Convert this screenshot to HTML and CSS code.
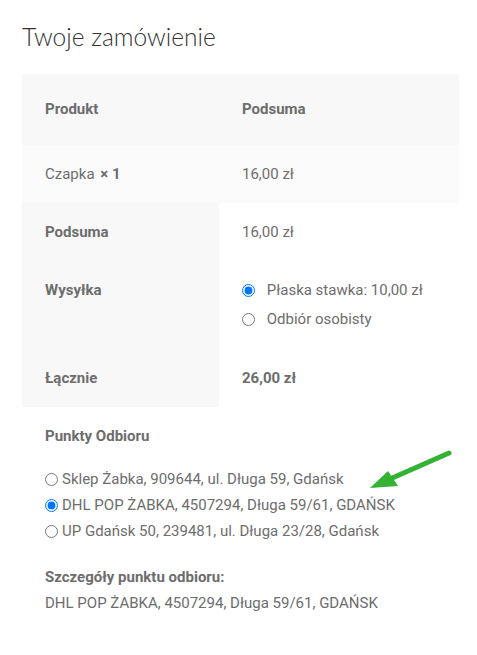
FILE: index.html
```html
<!DOCTYPE html>
<html lang="pl">
<head>
  <meta charset="UTF-8">
  <meta name="viewport" content="width=device-width, initial-scale=1.0">
  <title>Twoje zamówienie</title>
  <link rel="stylesheet" href="styles.css">
</head>
<body>
  <div class="order">
    <h3 class="order-title">Twoje zamówienie</h3>

    <table class="review">
      <thead>
        <tr>
          <th class="col-name">Produkt</th>
          <th class="col-total">Podsuma</th>
        </tr>
      </thead>
      <tbody>
        <tr class="cart-item">
          <td>Czapka <strong class="qty">× 1</strong></td>
          <td>16,00 zł</td>
        </tr>
      </tbody>
      <tfoot>
        <tr class="subtotal">
          <th>Podsuma</th>
          <td>16,00 zł</td>
        </tr>
        <tr class="shipping">
          <th>Wysyłka</th>
          <td>
            <ul class="methods">
              <li><label><input type="radio" name="ship" checked> Płaska stawka: 10,00 zł</label></li>
              <li><label><input type="radio" name="ship"> Odbiór osobisty</label></li>
            </ul>
          </td>
        </tr>
        <tr class="total">
          <th>Łącznie</th>
          <td><strong>26,00 zł</strong></td>
        </tr>
      </tfoot>
    </table>

    <div class="points">
      <h4>Punkty Odbioru</h4>
      <label class="point"><input type="radio" name="point">Sklep Żabka, 909644, ul. Długa 59, Gdańsk</label>
      <label class="point"><input type="radio" name="point" checked>DHL POP ŻABKA, 4507294, Długa 59/61, GDAŃSK</label>
      <label class="point"><input type="radio" name="point">UP Gdańsk 50, 239481, ul. Długa 23/28, Gdańsk</label>

      <h4 class="details-title">Szczegóły punktu odbioru:</h4>
      <p class="details">DHL POP ŻABKA, 4507294, Długa 59/61, GDAŃSK</p>
    </div>

    <svg class="arrow" width="95" height="50" viewBox="0 0 95 50">
      <line x1="89" y1="8" x2="30" y2="34" stroke="#33b233" stroke-width="5" stroke-linecap="round"/>
      <polygon points="10,43 28,26 38,41" fill="#33b233"/>
    </svg>
  </div>
</body>
</html>
```

FILE: styles.css
```css
body {
  margin: 0;
  background: #fff;
  font-family: Roboto, "Noto Sans", sans-serif;
  font-size: 15px;
  color: #6d6d6d;
}
.order {
  position: relative;
  padding: 0 18px 0 22px;
}
.order-title {
  margin: 0;
  padding-top: 22px;
  height: 74px;
  font-family: Lato, sans-serif;
  font-size: 24.5px;
  font-weight: 300;
  color: #333;
  box-sizing: border-box;
}
.review {
  width: 437px;
  border-collapse: collapse;
  border-spacing: 0;
}
.review th,
.review td {
  text-align: left;
  vertical-align: top;
  line-height: 18px;
  padding: 20px 23px;
}
.review th {
  font-weight: 700;
}
.review .col-name {
  width: 151px;
}
.review thead th {
  background: #f8f8f8;
  padding-top: 26px;
  padding-bottom: 27px;
}
.cart-item td {
  background: #fbfbfb;
}
.qty {
  margin-left: 2px;
}
.review tfoot th {
  background: #f8f8f8;
}
.review tfoot td {
  background: #fff;
}
.shipping th,
.shipping td {
  padding-bottom: 21px;
}
.methods {
  list-style: none;
  margin: 0;
  padding: 0;
}
.methods li {
  margin-bottom: 11px;
}
.methods li:last-child {
  margin-bottom: 0;
}
.methods input {
  margin: 0 8px 0 0;
  width: 13px;
  height: 13px;
  vertical-align: -2px;
}
.points {
  padding: 20px 23px 0;
}
.points h4 {
  margin: 0 0 21px;
  font-size: 15px;
  line-height: 18px;
  font-weight: 700;
}
.point {
  display: block;
  line-height: 26px;
}
.point input {
  margin: 0 4px 0 0;
  width: 13px;
  height: 13px;
  vertical-align: -2px;
}
.points .details-title {
  margin: 24px 0 8px;
}
.details {
  margin: 0;
  line-height: 18px;
}
.arrow {
  position: absolute;
  left: 360px;
  top: 445px;
}
```
